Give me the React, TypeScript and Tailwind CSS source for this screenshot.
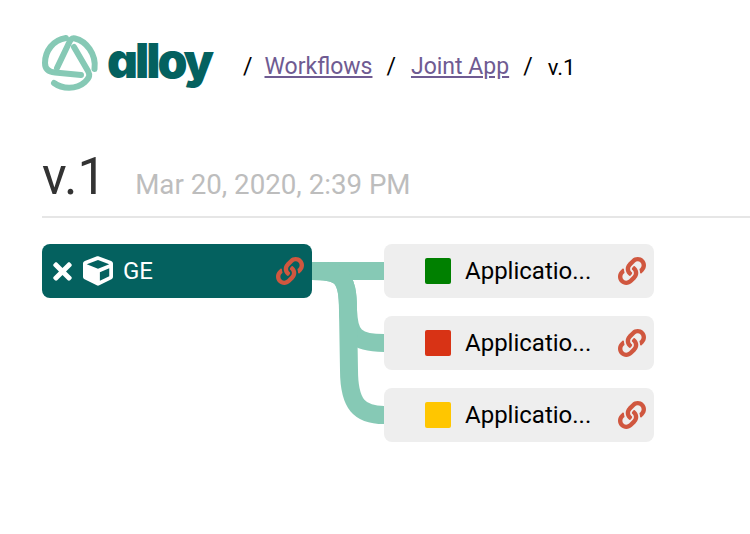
import { FaCube, FaLink, FaTimes } from "react-icons/fa";

const apps = [
  { name: "Application", color: "bg-[#008000]" },
  { name: "Application", color: "bg-[#d83315]" },
  { name: "Application", color: "bg-[#ffc600]" },
];

function Logo() {
  return (
    <svg width="60" height="60" viewBox="0 0 60 60" fill="none" stroke="#86c9b5" strokeWidth="6" strokeLinecap="round" strokeLinejoin="round">
      <path d="M26 5 C13 7 5 18 5 30 C5 36 9 39 15 39.5 L41 42" />
      <path d="M14 50 C22 56 36 57 45 49 C50 44 50 42 48 38 L34 14" />
      <path d="M54.5 36 C56.5 21 46 8 35 5.5 C31 4.5 30 8 28 12 L17 35" />
    </svg>
  );
}

function NodeLink() {
  return <FaLink className="text-[28px] text-[#d0573f]" />;
}

export default function App() {
  return (
    <div className="relative w-[750px] h-[534px] bg-white overflow-hidden font-['Roboto',sans-serif] text-black">
      <header className="flex items-center pl-[40px] pt-[33px] h-[93px]">
        <Logo />
        <span className="ml-[7px] w-[106px] -mt-[5px] text-[48px] leading-none font-black tracking-[-3px] text-[#04615f] font-['Inter',sans-serif] [font-feature-settings:'cv11']">alloy</span>
        <nav className="flex items-center ml-[30px] mt-[8px] text-[23px]">
          <span>/</span>
          <a href="#" className="ml-[12px] underline text-[#6f5b92]">Workflows</a>
          <span className="ml-[14px]">/</span>
          <a href="#" className="ml-[15px] underline text-[#6f5b92]">Joint App</a>
          <span className="ml-[14px]">/</span>
          <span className="ml-[15px] text-[22px]">v.1</span>
        </nav>
      </header>

      <div className="ml-[42px] mt-[48px] flex items-baseline border-b-2 border-[#e6e6e6] h-[77px]">
        <h1 className="text-[51px] leading-[72px] font-normal text-[#333333]">v.1</h1>
        <span className="ml-[29px] text-[27.7px] text-[#bdbdbd]">Mar 20, 2020, 2:39 PM</span>
      </div>

      <div className="relative ml-[42px] mt-[26px] flex gap-[72px]">
        <div className="flex items-center w-[270px] h-[54px] rounded-lg bg-[#04615f] text-white pl-[7px] pr-[8px]">
          <FaTimes className="text-[27px]" />
          <FaCube className="ml-[7px] text-[30px]" />
          <span className="ml-[10px] text-2xl flex-1">GE</span>
          <NodeLink />
        </div>
        <div className="flex flex-col gap-[18px]">
          {apps.map((app, i) => (
            <div key={i} className="flex items-center w-[270px] h-[54px] rounded-lg bg-[#eeeeee] pl-[41px] pr-[8px]">
              <div className={`w-[26px] h-[26px] rounded-[2px] ${app.color}`} />
              <span className="ml-[14px] text-2xl flex-1">{app.name.slice(0, 10)}...</span>
              <NodeLink />
            </div>
          ))}
        </div>
        {/* links between nodes */}
        <svg className="absolute left-[270px] top-0" width="72" height="198" viewBox="0 0 72 198" fill="none" stroke="#86c9b5" strokeWidth="18">
          <path d="M0 27 L72 27" />
          <path d="M0 27 C28 27 36 31 36 66 C37 91 43 99 72 99" />
          <path d="M0 27 C28 27 36 31 36 66 L37 126 C37 161 48 171 72 171" />
        </svg>
      </div>
    </div>
  );
}
